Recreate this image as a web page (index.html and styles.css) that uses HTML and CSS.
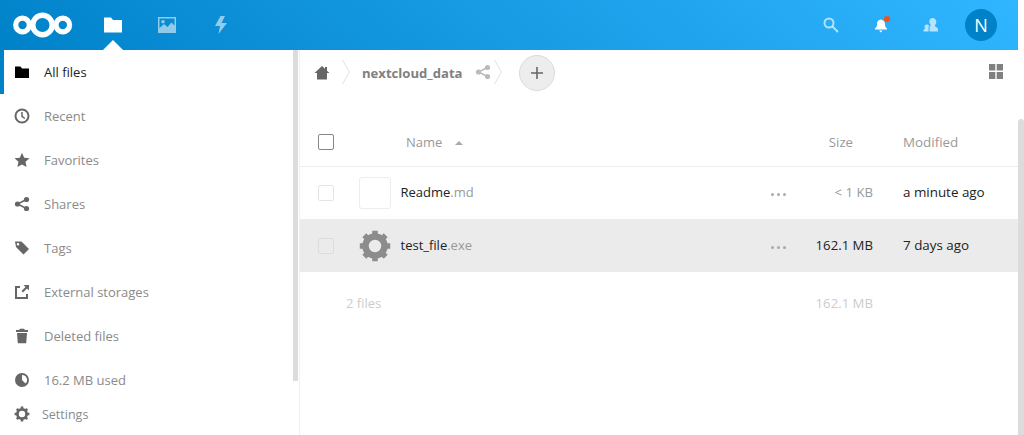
FILE: index.html
```html
<!DOCTYPE html>
<html lang="en">
<head>
<meta charset="utf-8">
<title>Files - Nextcloud</title>
<link rel="stylesheet" href="styles.css">
</head>
<body>
<header class="topbar">
  <div class="top-left">
    <svg class="logo" width="62" height="30" viewBox="0 0 62 30"><g fill="none" stroke="#fff"><circle cx="30.500" cy="15" r="9.700" stroke-width="5.400"/><circle cx="10.500" cy="15" r="6.800" stroke-width="5.200"/><circle cx="50.800" cy="15" r="6.800" stroke-width="5.200"/></g></svg>
    <nav class="apps">
      <a class="app active"><svg width="20" height="20" viewBox="0 0 20 20"><path fill="#fff" d="M1 2.500h7l2 2.500h9v12.500H1z"/></svg></a>
      <a class="app"><svg width="20" height="20" viewBox="0 0 20 20"><path fill="#fff" fill-opacity=".55" fill-rule="evenodd" d="M1 2h18v16H1zM2.500 3.500v9.500l4.500-4 3.500 3 4-4.500 3 3V3.500zM6 5a1.800 1.800 0 1 1 0 3.600A1.800 1.800 0 0 1 6 5z"/></svg></a>
      <a class="app"><svg width="20" height="20" viewBox="0 0 20 20"><path fill="#fff" fill-opacity=".55" d="M9.500 1 4 11h5l-1.500 8L16 8h-5.500L14 1z"/></svg></a>
    </nav>
  </div>
  <div class="top-right">
    <svg class="tool" width="16" height="16" viewBox="0 0 16 16"><g fill="none" stroke="#fff" stroke-opacity=".65" stroke-width="2"><circle cx="6" cy="6" r="4.500"/><path d="m9.500 9.500 5.500 5.500"/></g></svg>
    <span class="bell"><svg width="16" height="16" viewBox="0 0 16 16"><path fill="#fff" d="M7.500 2.500C4.800 3 4 5 4 7.500c0 2-.8 3-2 4v1h12v-1c-1.200-1-2-2-2-4 0-2.500-.8-4.500-4.500-5zM6 13.500h3.500L7.800 15.500z"/></svg><i class="dot"></i></span>
    <svg class="tool last" width="16" height="16" viewBox="0 0 16 16"><path fill="#fff" fill-opacity=".65" d="M9.500 1C7.500 1 6.300 2.600 6.300 4.500c0 1.300.6 2.500 1.400 3.300C7.700 9 6.500 9.500 6.500 11v3.500H15v-2c0-1.500-1-2-2.500-3-.7-.5-.7-1.200-.2-1.800.7-.8 1-1.800 1-3C13.300 2.600 11.500 1 9.500 1zM3.500 7.500C2.300 7.500 1.500 8.500 1.500 9.600c0 .8.300 1.300.6 1.800-.8.400-1.600.8-1.600 1.800v1.300h5V11c0-1 .3-1.600.8-2.300-.5-.7-1.500-1.200-2.800-1.200z"/></svg>
    <span class="avatar">N</span>
  </div>
</header>
<div class="page">
  <aside class="sidebar">
    <ul class="nav">
      <li class="item current"><svg width="16" height="16" viewBox="0 0 16 16"><path fill="#000" d="M1 2.500h5.500L8 4.500h7v9.500H1z"/></svg><span>All files</span></li>
      <li class="item"><svg width="16" height="16" viewBox="0 0 16 16"><circle cx="8" cy="8" r="6.500" fill="none" stroke="#666" stroke-width="2"/><path d="M8 4v4.300l2.800 2.200" fill="none" stroke="#666" stroke-width="1.500"/></svg><span>Recent</span></li>
      <li class="item"><svg width="16" height="16" viewBox="0 0 16 16"><path fill="#666" d="m8 .8 2.200 4.900 5.300.6-4 3.500 1.100 5.300L8 12.400l-4.600 2.700 1.100-5.300-4-3.500 5.300-.6z"/></svg><span>Favorites</span></li>
      <li class="item"><svg width="16" height="16" viewBox="0 0 16 16"><g fill="#666"><circle cx="3.500" cy="8" r="2.600"/><circle cx="12.500" cy="3.500" r="2.600"/><circle cx="12.500" cy="12.500" r="2.600"/></g><path d="M12.500 3.500 3.500 8l9 4.500" fill="none" stroke="#666" stroke-width="1.500"/></svg><span>Shares</span></li>
      <li class="item"><svg width="16" height="16" viewBox="0 0 16 16"><path fill="#666" fill-rule="evenodd" d="M1 1.500h6.500l7.500 7.600-5.500 5.500L2 7zM4 3a1.300 1.300 0 1 0 0 2.600A1.300 1.300 0 0 0 4 3z"/></svg><span>Tags</span></li>
      <li class="item"><svg width="16" height="16" viewBox="0 0 16 16"><path fill="none" stroke="#666" stroke-width="2" d="M6 3H2v11h11v-4"/><path fill="#666" d="M9.500 1H15v5.500l-2-2-4 4L7.500 7l4-4z"/></svg><span>External storages</span></li>
      <li class="item"><svg width="16" height="16" viewBox="0 0 16 16"><path fill="#666" d="M6 0.800h4l1 1.200h3v2H2V2h3zM3 5h10l-.8 10.200H3.800z"/></svg><span>Deleted files</span></li>
      <li class="item"><svg width="16" height="16" viewBox="0 0 16 16"><path fill="#666" fill-rule="evenodd" d="M8 1a7 7 0 1 1 0 14A7 7 0 0 1 8 1zm0 2v5l3.500 3.600A5 5 0 0 0 8 3z"/></svg><span>16.2 MB used</span></li>
    </ul>
    <div class="settings"><svg width="16" height="16" viewBox="0 0 16 16"><circle cx="8" cy="8" r="4.600" fill="none" stroke="#666" stroke-width="2.800"/><path stroke="#666" stroke-width="2.600" d="M8 .6v3M8 12.400v3M.6 8h3M12.400 8h3M2.800 2.800l2 2M11.200 11.200l2 2M2.800 13.200l2-2M11.200 4.800l2-2"/></svg><span>Settings</span></div>
    <div class="side-scroll"></div>
  </aside>
  <main class="content">
    <div class="crumbs">
      <svg class="home" width="16" height="16" viewBox="0 0 16 16"><path fill="#666" d="M8 1 0.500 8H3v6.500h10V8h2.500L13 5.700V2h-2v1.800z"/></svg>
      <svg class="chev chev-a" width="10" height="30" viewBox="0 0 10 30"><path d="m1.500 3 7 12-7 12" fill="none" stroke="#e2e2e2"/></svg>
      <span class="folder">nextcloud_data</span>
      <svg class="sh" width="16" height="16" viewBox="0 0 16 16"><g fill="#bbb"><circle cx="3.500" cy="8" r="2.600"/><circle cx="12.500" cy="3.500" r="2.600"/><circle cx="12.500" cy="12.500" r="2.600"/></g><path d="M12.500 3.500 3.500 8l9 4.500" fill="none" stroke="#bbb" stroke-width="1.500"/></svg>
      <svg class="chev chev-b" width="10" height="30" viewBox="0 0 10 30"><path d="m1.500 3 7 12-7 12" fill="none" stroke="#e2e2e2"/></svg>
      <span class="add"><svg width="14" height="14" viewBox="0 0 14 14"><path d="M7 1v12M1 7h12" stroke="#666" stroke-width="1.600"/></svg></span>
      <svg class="grid-ico" width="14" height="15" viewBox="0 0 14 15"><path fill="#808080" d="M0 0h6.300v6.500H0zM7.700 0H14v6.500H7.700zM0 8h6.300v7H0zM7.700 8H14v7H7.700z"/></svg>
    </div>
    <div class="row head">
      <span class="c-check"><i class="box strong"></i></span>
      <span class="c-name">Name<i class="sort"></i></span>
      <span class="c-size">Size</span>
      <span class="c-date">Modified</span>
    </div>
    <div class="row file">
      <span class="c-check"><i class="box"></i></span>
      <span class="thumb blank"></span>
      <span class="fname">Readme<em>.md</em></span>
      <span class="dots"><i></i><i></i><i></i></span>
      <span class="c-size small">&lt; 1 KB</span>
      <span class="c-date">a minute ago</span>
    </div>
    <div class="row file tall selected">
      <span class="c-check"><i class="box"></i></span>
      <span class="thumb"><svg width="32" height="32" viewBox="0 0 32 32"><circle cx="16" cy="16" r="9.500" fill="none" stroke="#8c8c8c" stroke-width="6.500"/><path stroke="#8c8c8c" stroke-width="5.500" d="M16 .8v5M16 26.200v5M.8 16h5M26.200 16h5M5.300 5.300l3.500 3.500M23.200 23.200l3.500 3.500M5.300 26.700l3.500-3.500M23.200 8.800l3.500-3.500"/></svg></span>
      <span class="fname">test_file<em>.exe</em></span>
      <span class="dots"><i></i><i></i><i></i></span>
      <span class="c-size">162.1 MB</span>
      <span class="c-date">7 days ago</span>
    </div>
    <div class="row summary">
      <span class="count">2 files</span>
      <span class="c-size">162.1 MB</span>
      <span class="c-date"></span>
    </div>
    <div class="main-scroll"></div>
  </main>
</div>
</body>
</html>
```
FILE: styles.css
```css
* { box-sizing: border-box; }
html, body { margin: 0; height: 100%; overflow: hidden; background: #fff; }
body { font-family: "Open Sans", sans-serif; font-size: 13px; color: #222; width: 1024px; height: 435px; }
svg { display: block; flex: none; }
.topbar { height: 50px; width: 1018px; display: flex; justify-content: space-between; align-items: center; background: linear-gradient(40deg, #0082c9, #30b6ff); }
.top-left { display: flex; align-items: center; padding-left: 12px; }
.apps { display: flex; margin-left: 12px; }
.app { width: 54px; height: 50px; display: flex; align-items: center; justify-content: center; position: relative; }
.app.active::after { content: ""; position: absolute; left: 17px; bottom: 0; border: 10px solid transparent; border-top: 0; border-bottom: 10px solid #fff; }
.top-right { display: flex; align-items: center; }
.tool, .bell { margin-right: 34px; }
.tool.last { margin-right: 26px; }
.bell { position: relative; display: block; }
.dot { position: absolute; top: -1px; right: -1px; width: 6px; height: 6px; border-radius: 50%; background: #f4511e; }
.avatar { width: 32px; height: 32px; margin-right: 21px; border-radius: 50%; background: #0082c9; color: #fff; font-size: 18px; display: flex; align-items: center; justify-content: center; }
.page { display: flex; height: 385px; }
.sidebar { width: 300px; position: relative; border-right: 1px solid #efefef; }
.nav { list-style: none; margin: 0; padding: 0; }
.item { height: 44px; display: flex; align-items: center; padding-left: 14px; gap: 14px; color: #8a8a8a; }
.item.current { color: #222; box-shadow: inset 4px 0 0 #0082c9; }
.settings { height: 26px; margin-top: -1px; display: flex; align-items: center; padding-left: 14px; gap: 12px; color: #8a8a8a; font-size: 12.500px; }
.side-scroll { position: absolute; top: 0; right: 1px; width: 5px; height: 331px; background: #dcdcdc; }
.content { flex: 1; position: relative; }
.crumbs { height: 46px; display: flex; align-items: center; padding-left: 14px; padding-right: 21px; }
.chev { margin-bottom: 3px; }
.chev-a { margin-left: 11px; }
.folder { margin-left: 11px; font-weight: 700; color: #808080; font-size: 13.100px; }
.sh { margin-left: 12px; margin-bottom: 3px; }
.chev-b { margin-left: 2px; }
.add { width: 36px; height: 36px; margin-left: 16px; border-radius: 50%; background: #ededed; border: 1px solid #dbdbdb; display: flex; align-items: center; justify-content: center; }
.grid-ico { margin-left: auto; margin-bottom: 3px; }
.row { display: flex; align-items: center; width: 718px; border-bottom: 1px solid #ededed; }
.head { height: 71px; padding-top: 22px; color: #999; }
.c-check { width: 59px; padding-left: 18px; display: flex; }
.box { display: block; width: 16px; height: 16px; border: 1px solid #e4e4e4; border-radius: 2px; }
.selected .box { border-color: #dcdcdc; }
.box.strong { border-color: #878787; }
.c-name { margin-left: 47px; flex: 1; display: flex; align-items: center; }
.sort { margin-left: 13px; margin-top: 2px; border: 4px solid transparent; border-top: 0; border-bottom: 4px solid #aaa; }
.c-size { width: 85px; text-align: right; font-size: 13.200px; }
.head .c-size { padding-right: 20px; }
.c-date { width: 145px; padding-left: 30px; white-space: nowrap; font-size: 13.400px; }
.file { height: 52px; border-bottom: 0; }
.file.tall { height: 53px; }
.selected { background: #ebebeb; }
.thumb { width: 32px; height: 32px; border-radius: 3px; }
.blank { border: 1px solid #ededed; }
.fname { margin-left: 9.500px; flex: 1; color: #222; padding-bottom: 2px; }
.fname em { font-style: normal; color: #999; }
.file .c-size, .file .c-date { padding-bottom: 2px; }
.dots { display: flex; gap: 3px; margin-right: 2px; margin-top: 3px; }
.dots i { width: 3px; height: 3px; border-radius: 50%; background: #aaa; }
.small { color: #999; }
.summary { height: 62px; border: 0; color: #ccc; }
.count { margin-left: 46px; flex: 1; }
.main-scroll { position: absolute; top: 69px; right: 0; width: 6px; height: 316px; background: #dcdcdc; border-radius: 3px 3px 0 0; }
```
